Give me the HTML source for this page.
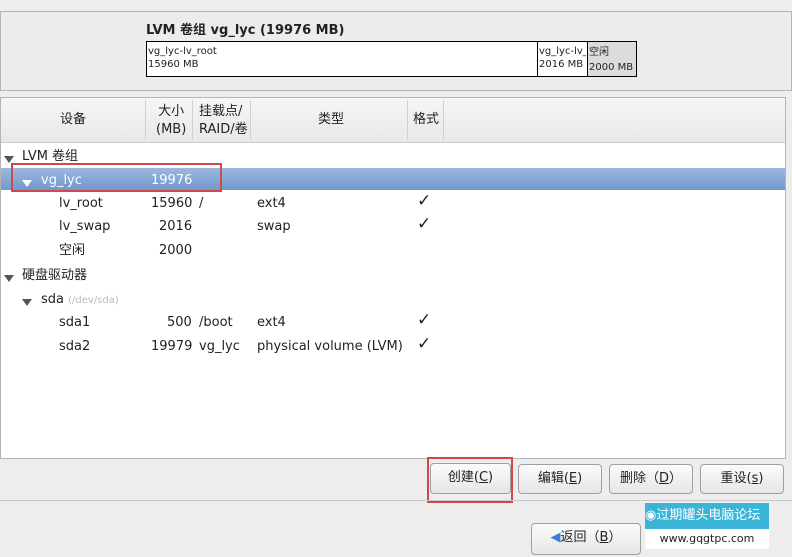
<!DOCTYPE html><html><head><meta charset="utf-8"><style>
body{margin:0;width:792px;height:557px;background:#ededed;font-family:"DejaVu Sans","Noto Sans CJK SC",sans-serif;font-size:13px;line-height:16px;color:#222;position:relative;overflow:hidden}
.a{position:absolute;white-space:nowrap}
.r{margin-top:2px}
.btn{position:absolute;border:1px solid #a0a0a0;border-radius:4px;background:linear-gradient(#fbfbfb,#e6e6e6);text-align:center;font-size:13px;line-height:28px}
.tri{display:inline-block;width:0;height:0;border-left:5px solid transparent;border-right:5px solid transparent;border-top:7px solid #555}
</style></head><body>
<div class="a" style="left:0;top:11px;width:790px;height:78px;border:1px solid #b5b5b5;background:#ececec"></div>
<div class="a" style="left:146px;top:23px;font-weight:bold;font-size:13px">LVM 卷组 vg_lyc (19976 MB)</div>
<div class="a" style="left:146px;top:41px;width:489px;height:34px;border:1px solid #000;background:#fff"></div>
<div class="a" style="left:537px;top:42px;width:1px;height:34px;background:#000"></div>
<div class="a" style="left:587px;top:42px;width:48px;height:34px;border-left:1px solid #000;background:#dcdcdc"></div>
<div class="a" style="left:148px;top:45px;font-size:10px;line-height:13px">vg_lyc-lv_root<br>15960 MB</div>
<div class="a" style="left:539px;top:45px;font-size:10px;line-height:13px;width:47px;overflow:hidden">vg_lyc-lv_<br>2016 MB</div>
<div class="a" style="left:589px;top:45px;font-size:10px;line-height:15px">空闲<br>2000 MB</div>
<div class="a" style="left:0;top:97px;width:784px;height:360px;border:1px solid #b5b5b5;background:#fff"></div>
<div class="a" style="left:1px;top:98px;width:784px;height:44px;background:linear-gradient(#f6f6f6,#e8e8e8);border-bottom:1px solid #ccc"></div>
<div class="a" style="left:145px;top:100px;width:1px;height:40px;background:#d0d0d0"></div>
<div class="a" style="left:192px;top:100px;width:1px;height:40px;background:#d0d0d0"></div>
<div class="a" style="left:250px;top:100px;width:1px;height:40px;background:#d0d0d0"></div>
<div class="a" style="left:407px;top:100px;width:1px;height:40px;background:#d0d0d0"></div>
<div class="a" style="left:443px;top:100px;width:1px;height:40px;background:#d0d0d0"></div>
<div class="a" style="left:60px;top:112px">设备</div>
<div class="a" style="left:156px;top:103px;line-height:18px;text-align:center">大小<br>(MB)</div>
<div class="a" style="left:199px;top:103px;line-height:18px">挂载点/<br>RAID/卷</div>
<div class="a" style="left:318px;top:112px">类型</div>
<div class="a" style="left:413px;top:112px">格式</div>
<div class="a" style="left:1px;top:168px;width:784px;height:22px;background:linear-gradient(#9cb8de,#7198cc)"></div>
<div class="a" style="left:4px;top:152px"><span class="tri"></span></div><div class="a r" style="left:22px;top:147px">LVM 卷组</div>
<div class="a" style="left:22px;top:176px"><span class="tri" style="border-top-color:#fff"></span></div><div class="a r" style="left:41px;top:171px;color:#fff">vg_lyc</div><div class="a r" style="left:151px;top:171px;color:#fff">19976</div>
<div class="a r" style="left:59px;top:194px">lv_root</div><div class="a r" style="left:151px;top:194px">15960</div><div class="a r" style="left:199px;top:194px">/</div><div class="a r" style="left:257px;top:194px">ext4</div><div class="a" style="left:417px;top:193px;font-size:17px">✓</div>
<div class="a r" style="left:59px;top:217px">lv_swap</div><div class="a r" style="left:159px;top:217px">2016</div><div class="a r" style="left:257px;top:217px">swap</div><div class="a" style="left:417px;top:216px;font-size:17px">✓</div>
<div class="a r" style="left:59px;top:241px">空闲</div><div class="a r" style="left:159px;top:241px">2000</div>
<div class="a" style="left:4px;top:271px"><span class="tri"></span></div><div class="a r" style="left:22px;top:266px">硬盘驱动器</div>
<div class="a" style="left:22px;top:295px"><span class="tri"></span></div><div class="a r" style="left:41px;top:290px">sda <span style="color:#bbb;font-size:10px">(/dev/sda)</span></div>
<div class="a r" style="left:59px;top:313px">sda1</div><div class="a r" style="left:167px;top:313px">500</div><div class="a r" style="left:199px;top:313px">/boot</div><div class="a r" style="left:257px;top:313px">ext4</div><div class="a" style="left:417px;top:312px;font-size:17px">✓</div>
<div class="a r" style="left:59px;top:337px">sda2</div><div class="a r" style="left:151px;top:337px">19979</div><div class="a r" style="left:199px;top:337px">vg_lyc</div><div class="a r" style="left:257px;top:337px">physical volume (LVM)</div><div class="a" style="left:417px;top:336px;font-size:17px">✓</div>
<div class="a" style="left:11px;top:163px;width:207px;height:25px;border:2px solid #d04848"></div>
<div class="btn" style="left:430px;top:463px;width:79px;height:29px">创建(<u>C</u>)</div>
<div class="btn" style="left:518px;top:464px;width:82px;height:28px">编辑(<u>E</u>)</div>
<div class="btn" style="left:609px;top:464px;width:82px;height:28px">删除（<u>D</u>）</div>
<div class="btn" style="left:700px;top:464px;width:82px;height:28px">重设(<u>s</u>)</div>
<div class="a" style="left:427px;top:457px;width:82px;height:42px;border:2px solid #d04848"></div>
<div class="a" style="left:0;top:500px;width:792px;height:1px;background:#c8c8c8"></div>
<div class="btn" style="left:531px;top:523px;width:108px;height:30px"><span style="color:#3a7fd0">◀</span>返回（<u>B</u>）</div>
<div class="a" style="left:645px;top:503px;width:124px;height:26px;background:#3ab5d8;color:#fff;font-size:13px;line-height:26px">◉过期罐头电脑论坛</div>
<div class="a" style="left:645px;top:529px;width:124px;height:20px;background:#fff;font-size:11px;line-height:20px;text-align:center">www.gqgtpc.com</div>
</body></html>
